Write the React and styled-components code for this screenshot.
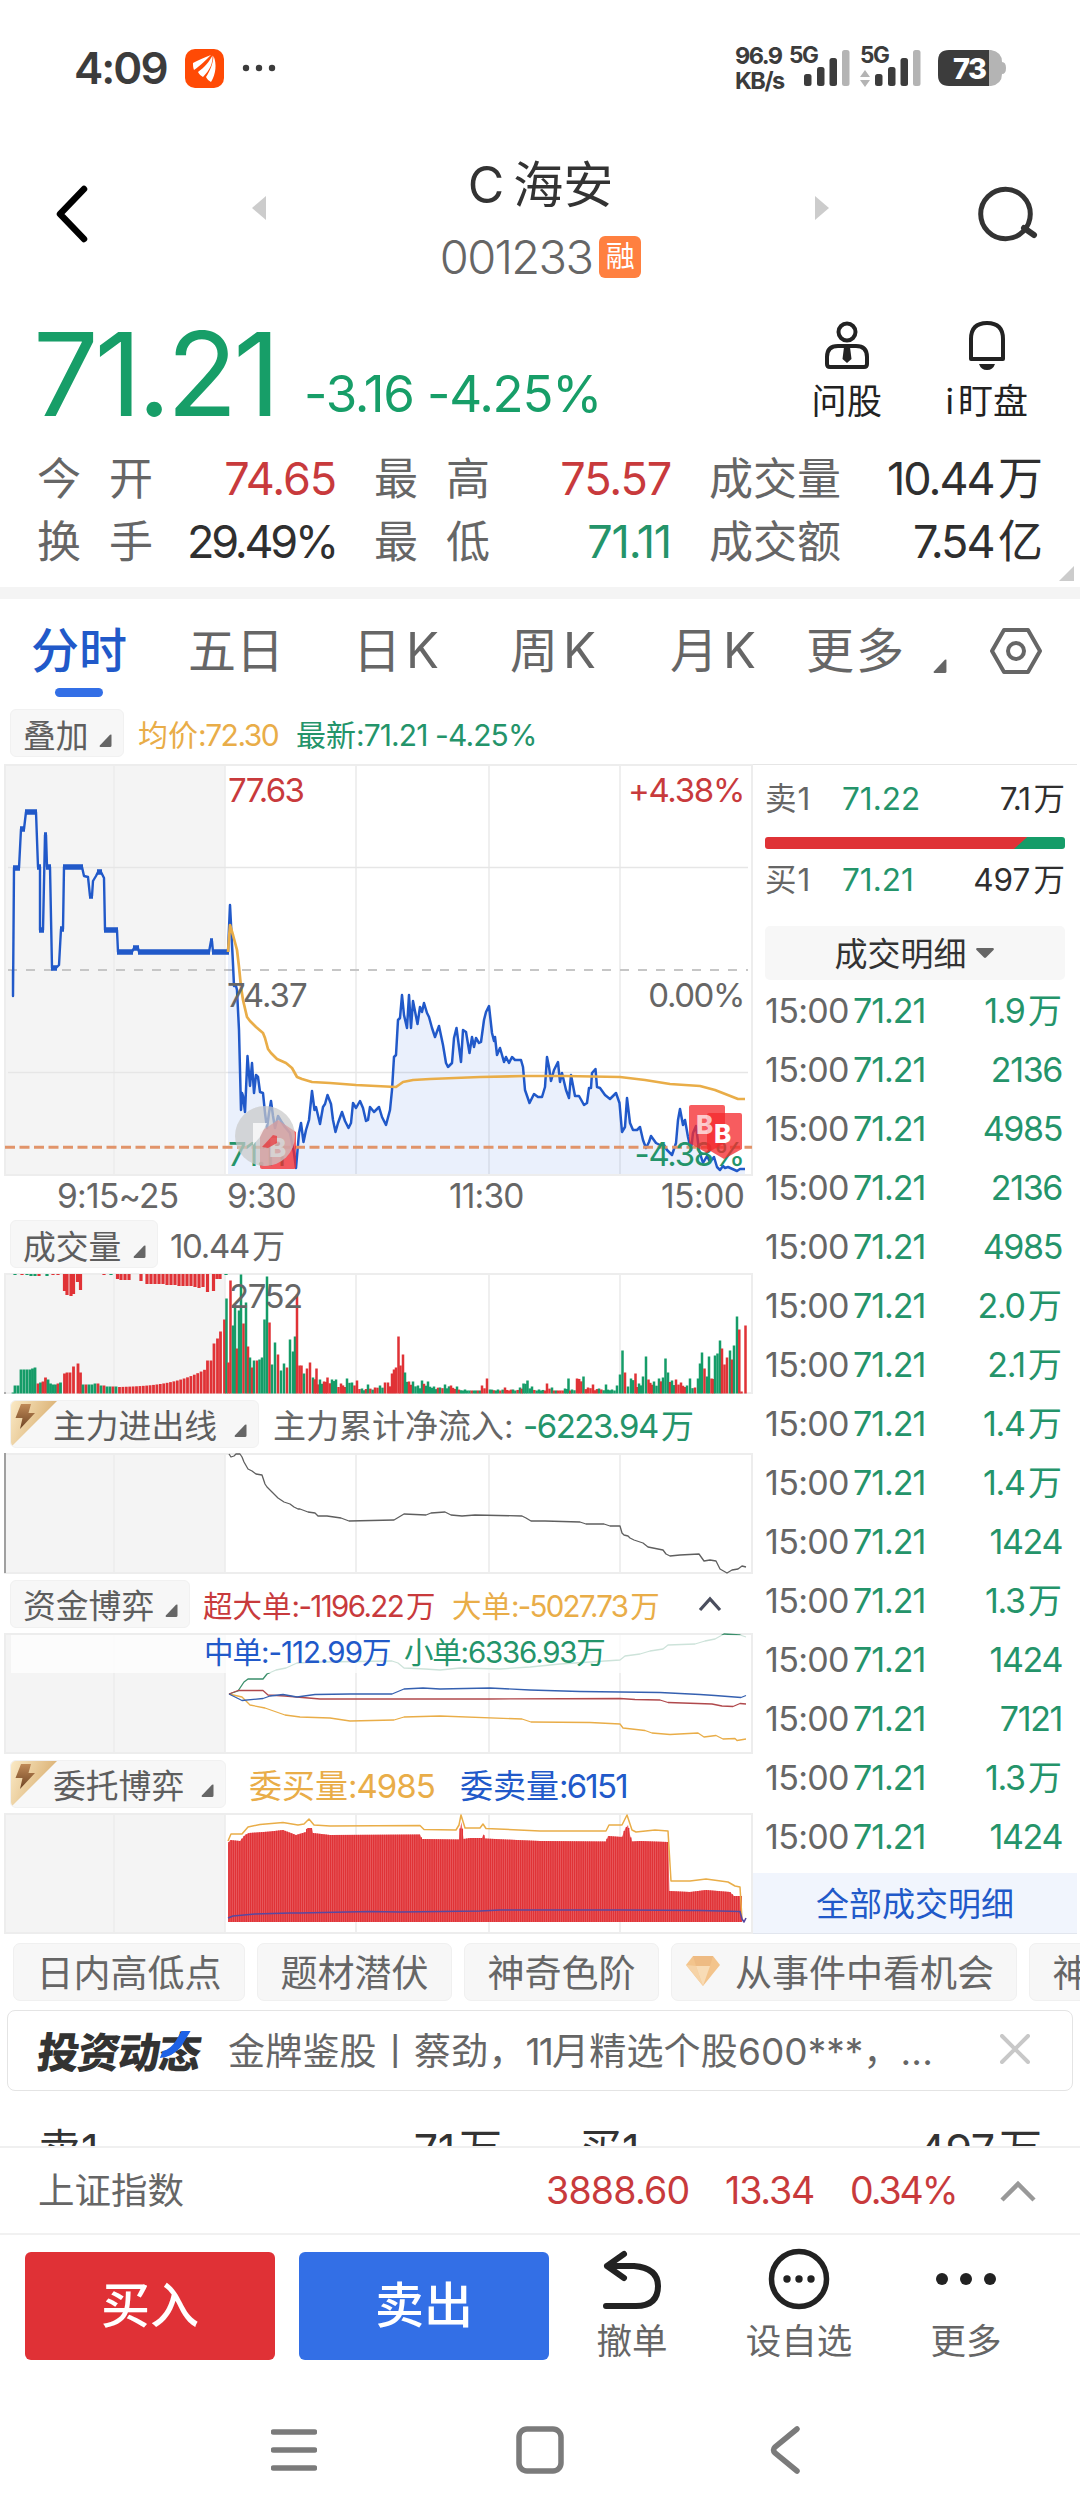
import React from 'react';
import styled, { createGlobalStyle, css } from 'styled-components';

const GlobalStyle = createGlobalStyle`
  * {
    box-sizing: border-box;
  }
  body {
    margin: 0;
    background: #fff;
    font-family: Inter, 'Noto Sans CJK SC', sans-serif;
    color: #333;
  }
  svg {
    display: block;
    flex: none;
  }
`;

const RED = '#c83a3c';
const GREEN = '#24946a';
const BLUE = '#2159c9';
const AMBER = '#e9ad48';
const GRAY = '#666';
const FONT = "Inter, 'Noto Sans CJK SC', sans-serif";

const tones = { red: RED, green: GREEN, blue: BLUE, amber: AMBER, gray: GRAY, dark: '#2f2f2f' };

const Screen = styled.div`
  width: 1080px;
  height: 2520px;
  display: flex;
  flex-direction: column;
  background: #fff;
  overflow: hidden;
`;

/* tight digits, sized per use */
const Num = styled.span`
  color: ${({ $tone }) => tones[$tone] || 'inherit'};
  letter-spacing: ${({ $ls = -0.025 }) => $ls}em;
  white-space: nowrap;
`;

const Unit = styled.span`
  margin-left: 0.1em;
  letter-spacing: 0;
`;

/* ---------- status bar ---------- */

const StatusBar = styled.div`
  height: 136px;
  flex: none;
  display: flex;
  align-items: center;
  justify-content: space-between;
  padding: 0 73px 0 74px;
  color: #3c3c3c;
`;

const StatusGroup = styled.div`
  display: flex;
  align-items: center;
  gap: ${({ $gap }) => $gap}px;
`;

const Clock = styled.div`
  width: 94px;
  font-size: 44px;
  font-weight: 600;
  letter-spacing: -0.045em;
`;

const NetSpeed = styled.div`
  width: 49px;
  font-size: 23.5px;
  line-height: 25px;
  font-weight: 700;
  letter-spacing: -0.065em;
  white-space: nowrap;
`;

const Battery = styled.svg`
  margin-left: 7px;
`;

/* ---------- header ---------- */

const Header = styled.div`
  height: 156px;
  flex: none;
  display: grid;
  grid-template-columns: 252px 14px 1fr 14px 251px;
  align-items: center;
`;

const BackSlot = styled.div`
  padding-left: 56px;
`;

const SearchSlot = styled.div`
  display: flex;
  justify-content: flex-end;
  padding-right: 41px;
`;

const StepArrow = styled.svg`
  margin-bottom: 12px;
`;

const TitleBlock = styled.div`
  display: flex;
  flex-direction: column;
  align-items: center;
  padding-top: 12px;
`;

const StockName = styled.div`
  font-size: 50px;
  line-height: 73px;
  font-weight: 400;
  word-spacing: -5px;
`;

const CodeLine = styled.div`
  display: flex;
  align-items: center;
  gap: 7px;
  height: 69px;
  font-size: 47px;
  font-weight: 300;
  color: ${GRAY};
`;

const MarginBadge = styled.span`
  width: 42px;
  height: 42px;
  border-radius: 6px;
  background: #ff8040;
  color: #fff;
  font-size: 29px;
  line-height: 41px;
  font-weight: 400;
  text-align: center;
`;

/* ---------- quote ---------- */

const QuoteTop = styled.div`
  height: 155px;
  flex: none;
  display: flex;
  justify-content: space-between;
  padding: 0 52px 0 33px;
`;

const PriceLine = styled.div`
  display: flex;
  color: #179e68;
`;

const Price = styled.div`
  width: 271px;
  font-size: 116px;
  line-height: 164px;
  font-weight: 400;
  letter-spacing: -0.036em;
`;

const Change = styled.div`
  font-size: 51px;
  line-height: 203px;
  letter-spacing: -0.024em;
  white-space: nowrap;
`;

const QuoteActions = styled.div`
  display: flex;
  gap: 63px;
  padding-top: 29px;
`;

const QuoteAction = styled.div`
  display: flex;
  flex-direction: column;
  align-items: center;
  font-size: 35px;
  line-height: 60px;
  letter-spacing: 0.5px;
  color: #222;
`;

const Stats = styled.div`
  height: 140px;
  flex: none;
  display: grid;
  grid-template-columns: 299px 297px 334px;
  grid-auto-rows: 63px;
  column-gap: 38px;
  padding-left: 37px;
  position: relative;
`;

const Stat = styled.div`
  display: flex;
  justify-content: space-between;
  font-size: 45px;
  line-height: 64px;
  white-space: nowrap;
`;

const StatLabel = styled.span`
  font-size: 44px;
  color: ${GRAY};
  letter-spacing: ${({ $wide }) => ($wide ? 28 : 0)}px;
`;

const StatCorner = styled.svg`
  position: absolute;
  right: 6px;
  bottom: 6px;
`;

const Divider = styled.div`
  height: 12px;
  flex: none;
  background: #f4f4f4;
`;

/* ---------- tabs ---------- */

const Tabs = styled.div`
  height: 106px;
  flex: none;
  display: grid;
  grid-template-columns: 157px 165px 157px 160px 136px 127px 56px 1fr;
  align-items: center;
  padding: 0 0 3px 31px;
`;

const Tab = styled.div`
  position: relative;
  font-size: 48px;
  line-height: 103px;
  white-space: nowrap;
  letter-spacing: ${({ $loose }) => ($loose ? 2 : 0)}px;
  color: ${({ $active }) => ($active ? BLUE : GRAY)};
  font-weight: ${({ $active }) => ($active ? 500 : 400)};
  ${({ $active }) =>
    $active &&
    css`
      &::after {
        content: '';
        position: absolute;
        left: 24px;
        bottom: 5px;
        width: 48px;
        height: 9px;
        border-radius: 5px;
        background: #336fe6;
      }
    `}
`;

const Latin = styled.span`
  margin-left: 5px;
  font-size: 49px;
`;

const TabCaret = styled.div`
  margin-top: 31px;
`;

/* ---------- main body ---------- */

const Body = styled.div`
  flex: none;
  display: grid;
  grid-template-columns: 753px 324px;
`;

const Charts = styled.div`
  display: flex;
  flex-direction: column;
`;

const InfoBar = styled.div`
  height: ${({ $h = 59 }) => $h}px;
  display: flex;
  align-items: center;
  padding: 0 0 ${({ $lift = 0 }) => $lift}px 10px;
  font-size: ${({ $size = 33 }) => $size}px;
  white-space: nowrap;
`;

const Chip = styled.div`
  position: relative;
  width: ${({ $w }) => $w}px;
  height: 48px;
  display: flex;
  align-items: center;
  justify-content: space-between;
  padding: 0 11px 0 ${({ $hot }) => ($hot ? 42 : 12)}px;
  margin-right: ${({ $gap = 14 }) => $gap}px;
  border-radius: 6px;
  background: #f7f7f7;
  border: 1px solid #f1f1f1;
  font-size: 32.8px;
  color: #5e5e5e;
  overflow: hidden;
`;

const HotCorner = styled.svg`
  position: absolute;
  left: -1px;
  top: -1px;
`;

const ChipCaret = styled.div`
  margin-top: 14px;
`;

const Reading = styled.span`
  color: ${({ $tone }) => tones[$tone]};
  width: ${({ $w }) => ($w ? `${$w}px` : 'auto')};
`;

const Axis = styled.div`
  height: 40px;
  display: grid;
  grid-template-columns: 170px 222px 212px 81px;
  padding-left: 57px;
  font-size: 33.5px;
  line-height: 40px;
  color: ${GRAY};
`;

/* ---------- order column ---------- */

const Orders = styled.div`
  margin-top: 59px;
  border-top: 1px solid #e6e6e6;
  display: flex;
  flex-direction: column;
`;

const BestRow = styled.div`
  height: ${({ $h }) => $h}px;
  display: grid;
  grid-template-columns: 77px 1fr auto;
  align-items: center;
  padding: 0 12px 5px 12px;
  font-size: 31.5px;
  line-height: 40px;
`;

const PressureBar = styled.div`
  display: flex;
  height: 12px;
  margin: 0 12px;
  border-radius: 3px;
  overflow: hidden;
  background: linear-gradient(138deg, #df3236 0 83.5%, #159c68 83.9%);
`;

const DetailButton = styled.div`
  height: 54px;
  margin: 10px 12px 1px;
  padding-bottom: 2px;
  border-radius: 5px;
  background: #f7f7f7;
  display: flex;
  align-items: center;
  justify-content: center;
  gap: 9px;
  font-size: 33px;
  color: #333;
`;

const DetailCaret = styled.svg`
  margin: 2px 2px 0 0;
`;

const Trade = styled.div`
  height: 59px;
  display: grid;
  grid-template-columns: 88px 1fr auto;
  align-items: center;
  padding: 0 15px 0 12px;
  font-size: 34px;
  line-height: 58px;
`;

const AllTrades = styled.div`
  height: 61px;
  margin-top: 7px;
  padding-bottom: 3px;
  display: flex;
  align-items: center;
  justify-content: center;
  background: #f1f5fd;
  border-bottom: 1px solid #e2e6ee;
  font-size: 33px;
  color: ${BLUE};
`;

/* ---------- below the charts ---------- */

const Tags = styled.div`
  flex: none;
  display: flex;
  gap: 12px;
  padding: 9px 0 9px 13px;
`;

const Tag = styled.div`
  flex: none;
  width: ${({ $w }) => $w}px;
  height: 58px;
  display: flex;
  align-items: center;
  justify-content: center;
  gap: 15px;
  padding-bottom: 2px;
  border: 1px solid #f0f0f0;
  border-radius: 7px;
  background: #f7f7f7;
  font-size: 37px;
  color: ${GRAY};
  white-space: nowrap;
`;

const Diamond = styled.svg`
  margin-left: -8px;
`;

const News = styled.div`
  flex: none;
  height: 81px;
  margin: 0 7px;
  padding: 0 42px 3px 30px;
  display: flex;
  align-items: center;
  border: 1.5px solid #e4e4e4;
  border-radius: 8px;
`;

const NewsLogo = styled.div`
  position: relative;
  width: 190px;
  font-size: 42px;
  font-weight: 900;
  letter-spacing: -1.5px;
  transform: skewX(-8deg);
`;

const NewsSlash = styled.svg`
  position: absolute;
  left: 121px;
  top: 12px;
`;

const NewsText = styled.div`
  flex: 1;
  font-size: 37px;
  letter-spacing: 0.2px;
  color: ${GRAY};
  white-space: nowrap;
`;

const Peek = styled.div`
  flex: none;
  height: 55px;
  padding: 28px 38px 0 38px;
  display: grid;
  grid-template-columns: 464px 1fr;
  column-gap: 77px;
  overflow: hidden;
  font-size: 43px;
  line-height: 60px;
`;

const PeekPair = styled.div`
  display: flex;
  justify-content: space-between;
`;

const IndexBar = styled.div`
  flex: none;
  height: 87px;
  display: grid;
  grid-template-columns: 508px 179px 125px 150px 1fr;
  align-items: center;
  padding-left: 38px;
  border-top: 2px solid #f0f0f0;
  font-size: 37.5px;
`;

const IndexName = styled.span`
  margin-top: -4px;
  font-size: 36.5px;
  color: ${GRAY};
`;

const ActionBar = styled.div`
  flex: none;
  height: 151px;
  display: flex;
  align-items: flex-start;
  padding: 17px 0 0 25px;
  border-top: 2px solid #f1f1f1;
`;

const TradeButton = styled.div`
  width: 250px;
  height: 108px;
  margin-right: 24px;
  border-radius: 6px;
  background: ${({ $buy }) => ($buy ? '#e03136' : '#336fe6')};
  color: #fff;
  font-size: 49px;
  font-weight: 500;
  line-height: 108px;
  text-align: center;
`;

const Tool = styled.div`
  width: ${({ $w }) => $w}px;
  display: flex;
  flex-direction: column;
  align-items: center;
  gap: 4px;
  margin-top: -5px;
  font-size: 35.5px;
  line-height: 54px;
  color: ${GRAY};
`;

const NavBar = styled.div`
  flex: none;
  height: 131px;
  display: grid;
  grid-template-columns: 245px 246px 245px;
  justify-content: center;
  justify-items: center;
  align-items: center;
  padding-right: 1px;
`;

/* ---------- data ---------- */

const auction = [
  [13, 206], [13, 232], [14, 104], [19, 104], [21, 65], [24, 65], [26, 48], [36, 48], [38, 103], [40, 103], [40, 166], [43, 166],
  [45, 71], [46, 71], [47, 103], [50, 103], [52, 204], [56, 204], [59, 201], [61, 165], [63, 165], [64, 103], [82, 103], [84, 112],
  [88, 113], [90, 132], [92, 132], [93, 117], [96, 112], [98, 108], [101, 108], [104, 114], [105, 166], [117, 166], [118, 188],
  [132, 188], [134, 184], [138, 184], [139, 188], [209, 188], [211, 177], [212, 177], [213, 188], [228, 188],
];

const session = [
  [228, 188], [230, 141], [233, 200], [234, 222], [236, 222], [237, 226], [239, 266], [241, 346], [242, 329], [243, 332], [245, 348],
  [247.5, 292], [250, 322], [252, 299], [254, 329], [256, 311], [258, 313], [260, 328], [263, 329], [265, 349], [267, 364],
  [269, 349], [271, 337], [273, 352], [275, 364], [278, 352], [281, 357], [285, 363], [290, 369], [294, 389], [296, 404],
  [299, 369], [301, 359], [303.5, 378], [306, 366], [309, 356], [312, 327], [314.5, 346], [316, 343], [320, 360], [323, 343],
  [325, 340], [327.5, 331], [331, 340], [333, 356], [335.5, 368], [338, 359], [342, 348], [345, 357], [348.5, 364], [351, 359],
  [353, 339], [356, 344], [360, 337], [363, 344], [366, 357], [368, 356], [370, 343], [374, 348], [379, 343], [382, 353],
  [386, 361], [390, 346], [392, 326], [394, 293], [396, 291], [398, 256], [400, 254], [402, 231], [404, 251], [407, 264],
  [409, 231], [411, 264], [413, 237], [417.5, 260], [420, 243], [422, 248], [424, 239], [427, 249], [429, 253], [432, 264],
  [435, 273], [439, 262], [443, 281], [446, 299], [448, 303], [452, 299], [454, 274], [456.5, 264], [461, 298], [463, 266],
  [466, 268], [469.5, 289], [472, 273], [474, 283], [476, 274], [479, 279], [481, 278], [484, 256], [486, 248], [489, 242],
  [492, 269], [494, 277], [495, 273], [497, 291], [500, 284], [504, 298], [506, 293], [509, 299], [512, 293], [515, 296],
  [521, 296], [523, 303], [525, 326], [529.5, 339], [534, 330], [538, 333], [542, 333], [545, 323], [547, 293], [549, 303],
  [551, 317], [554, 306], [558, 298], [560, 318], [562, 309], [566, 326], [569, 334], [571, 311], [575, 332], [579, 332],
  [584, 341], [587, 339], [589, 324], [591, 324], [592, 309], [595.5, 305], [597, 323], [600, 324], [605, 331], [610, 335],
  [616, 329], [619.5, 339], [622, 368], [625, 363], [627, 334], [630, 359], [633, 366], [637, 366], [640, 363], [643, 376],
  [646, 384], [649, 378], [651, 372], [656, 379], [660, 381], [664, 381], [667, 386], [672, 391], [676, 379], [678, 356],
  [680, 345], [683, 361], [685, 356], [688, 373], [691, 386], [693, 369], [696, 362], [699, 386], [703, 399], [707, 392],
  [710, 398], [714, 393], [717, 403], [720, 406], [723, 402], [725, 404], [728, 403], [737, 407], [740, 405], [745, 405],
];

const average = [
  [228, 188], [230, 161], [233, 171], [237, 186], [239, 203], [241, 223], [243, 236], [247, 253], [250, 257], [256, 263],
  [263, 269], [265, 274], [268, 285], [271, 289], [277, 295], [286, 299], [292, 304], [297, 313], [302, 315], [312, 318],
  [330, 319], [356, 321], [396, 323], [403, 318], [413, 316], [430, 315], [480, 313], [524, 312], [565, 312], [620, 313],
  [645, 316], [670, 320], [700, 322], [715, 326], [738, 335], [745, 335],
];

// [x, height, color] of the auction bars, bottom side
const auctionBars = [
  [13, 1, 'g'], [15, 8, 'g'], [18, 8, 'g'], [21, 24, 'g'], [24, 24, 'g'], [27, 24, 'g'], [30, 24, 'g'], [32.5, 25, 'g'], [35, 26, 'g'],
  [38, 10, 'r'], [40.5, 11, 'g'], [43, 12, 'r'], [45.5, 16, 'r'], [48, 14, 'g'], [50.5, 10, 'g'], [53, 9, 'g'], [55.5, 9, 'g'], [58, 10, 'r'],
  [60.5, 11, 'g'], [64.5, 20, 'r'], [67, 21, 'r'], [70, 21, 'r'], [73.5, 27, 'r'], [78, 30, 'r'], [80.5, 21, 'r'], [83, 9, 'g'], [86, 9, 'r'],
  [89, 9, 'g'], [92, 9, 'g'], [95, 10, 'g'], [98, 10, 'r'], [101, 8, 'g'], [104, 8, 'r'], [107, 7, 'g'], [110, 7, 'g'], [113, 7, 'r'],
  [116, 7, 'g'],
];
for (let i = 0; i < 26; i += 1) {
  auctionBars.push([119.5 + i * 3.4, 6.5 + (i * i * i) / 1100 + i * 0.12, 'r']);
}
auctionBars.push([207.5, 33, 'r'], [211, 33, 'r'], [214, 50, 'r'], [217.5, 55, 'r'], [220.5, 62, 'r'], [224.5, 74, 'r']);

const hangingBars = [
  [15, 1, 'g'], [22, 1, 'r'], [27, 1, 'g'], [31, 2, 'g'], [35, 2, 'g'], [39, 2, 'r'], [47, 2, 'g'], [53, 1, 'r'], [58, 1, 'r'], [64.5, 17, 'r'], [67, 21, 'r'],
  [71, 22, 'r'], [73.5, 20, 'r'], [77.5, 8, 'r'], [80.5, 16, 'r'], [104, 1, 'r'], [111, 1, 'g'], [117.5, 5, 'r'], [121, 6, 'r'], [125, 6, 'r'],
  [129, 6, 'r'], [141, 7, 'r'], [147, 10, 'r'], [151, 10, 'r'], [155, 10, 'r'], [159, 10, 'r'], [163, 10, 'r'], [167, 11, 'r'],
  [171, 11, 'r'], [175, 11, 'r'], [179, 12, 'r'], [183, 12, 'r'], [187, 12, 'r'], [191, 12, 'r'], [195, 13, 'r'], [199, 14, 'r'],
  [203, 13, 'r'], [207.5, 18, 'r'], [213.5, 17, 'r'], [217, 5, 'r'], [220, 5, 'r'], [226, 1, 'g'],
];

const peaks = [
  [226.5, 95, 'g'], [228.5, 31, 'r'], [230.5, 113, 'r'], [233, 68, 'g'], [235, 87, 'g'], [237, 45, 'r'], [239, 83, 'g'], [241, 119, 'g'],
  [243.5, 70, 'r'], [246, 91, 'g'], [248, 47, 'r'], [250, 36, 'g'], [252, 26, 'r'], [254, 33, 'g'], [257, 33, 'r'], [259.5, 34, 'g'], [262, 36, 'g'],
  [264.5, 74, 'g'], [267, 117, 'g'], [269.5, 71, 'r'], [272, 29, 'g'], [275, 51, 'g'], [278, 39, 'r'], [281, 23, 'g'], [284, 30, 'g'],
  [287, 26, 'r'], [290, 54, 'g'], [293, 42, 'g'], [295, 57, 'g'], [297, 99, 'r'], [299.5, 28, 'r'], [301.5, 28, 'r'], [304, 20, 'g'],
  [307, 25, 'r'], [310, 31, 'r'], [313, 16, 'g'], [316.5, 25, 'r'], [320, 14, 'g'], [324, 12, 'r'], [327.5, 16, 'r'], [332, 14, 'g'],
  [336, 14, 'g'], [341, 10, 'r'], [347, 15, 'g'], [352, 11, 'g'], [357, 13, 'r'], [362, 5, 'g'], [368, 9, 'g'], [375, 6, 'r'],
  [380, 8, 'g'], [385, 11, 'r'], [388, 11, 'r'], [392, 20, 'r'], [394, 24, 'r'], [396, 26, 'r'], [398.5, 57, 'r'], [400.5, 28, 'r'],
  [403, 39, 'r'], [405, 21, 'g'], [409, 12, 'r'], [413, 12, 'g'], [418, 8, 'g'], [422, 13, 'g'], [428, 12, 'g'], [434, 7, 'g'],
  [440, 6, 'g'], [445, 9, 'g'], [451, 8, 'r'], [457, 7, 'g'], [465, 4, 'g'], [474, 3, 'g'], [482, 8, 'r'], [487, 15, 'r'],
  [490, 4, 'g'], [498, 4, 'g'], [505, 6, 'r'], [513, 4, 'g'], [520, 6, 'g'], [523.5, 10, 'g'], [527.5, 13, 'g'], [532, 7, 'g'],
  [539, 4, 'g'], [547, 10, 'r'], [552, 6, 'g'], [558, 3, 'r'], [565, 5, 'g'], [568.5, 15, 'g'], [572, 4, 'g'], [577, 15, 'r'],
  [583.5, 17, 'g'], [588, 6, 'r'], [593, 9, 'r'], [599, 5, 'g'], [606, 9, 'g'], [612, 4, 'g'], [617, 8, 'g'], [620, 19, 'g'],
  [622.5, 43, 'g'], [625, 21, 'r'], [628, 7, 'g'], [631, 15, 'g'], [635.5, 20, 'r'], [639, 10, 'g'], [643, 17, 'g'], [646, 37, 'g'],
  [648.5, 14, 'r'], [654, 12, 'g'], [659, 15, 'g'], [663, 16, 'g'], [665.5, 35, 'g'], [668, 21, 'g'], [672, 13, 'g'], [676, 14, 'r'],
  [681, 11, 'r'], [687, 8, 'g'], [690, 15, 'g'], [695, 6, 'r'], [698, 15, 'g'], [700, 30, 'g'], [702, 41, 'g'], [704.5, 25, 'r'],
  [707, 17, 'g'], [709, 37, 'g'], [711.5, 15, 'r'], [715, 38, 'g'], [717.5, 40, 'g'], [720, 53, 'g'], [722, 45, 'r'], [724.5, 29, 'r'],
  [727, 36, 'r'], [730, 43, 'g'], [732, 34, 'r'], [734, 48, 'g'], [737, 77, 'g'], [739.3, 64, 'r'], [741.5, 2, 'r'], [745.5, 68, 'r'],
];

// quieter minutes between two listed ones
const minuteBars = peaks.flatMap((bar, i) => {
  const next = peaks[i + 1];
  if (!next || bar[0] > 740) return [bar];
  const missing = Math.round((next[0] - bar[0]) / 2.2) - 1;
  const fill = [];
  for (let k = 1; k <= missing; k += 1) {
    const x = bar[0] + ((next[0] - bar[0]) * k) / (missing + 1);
    const h = Math.max(3, Math.min(bar[1], next[1]) * (0.65 + ((i * 7 + k * 3) % 5) * 0.08));
    fill.push([x, h, (i + k) % 3 ? bar[2] : 'r']);
  }
  return [bar, ...fill];
});

const mainFlow = [
  [229, 1], [231, 4], [234, 3], [236, 1], [240, 1], [242, 4], [244, 9], [248, 16], [252, 18], [256, 21], [262, 22], [265, 31],
  [267, 34], [272, 39], [278, 45], [284, 49], [290, 51], [294, 54], [298, 56], [300, 56], [308, 59], [315, 60], [318, 63], [327, 63],
  [341, 65], [349, 68], [394, 67], [399, 64], [404, 61], [426, 62], [431, 60], [445, 59], [451, 62], [462, 63], [475, 62], [522, 63],
  [526, 65], [531, 68], [545, 68], [580, 69], [586, 71], [604, 71], [610, 73], [620, 73], [622, 80], [624, 82], [628, 83], [630, 85],
  [634, 87], [643, 90], [648, 94], [663, 97], [666, 101], [670, 103], [680, 102], [699, 101], [704, 108], [710, 107], [716, 108],
  [720, 116], [727, 120], [732, 117], [738, 116], [742, 113], [746, 114],
];

const funds = {
  green: [
    [229, 61], [238, 58], [244, 49], [248, 46], [263, 46], [267, 41], [276, 37], [286, 35], [297, 30], [320, 29], [392, 28], [398, 30],
    [404, 35], [425, 36], [440, 37], [460, 35], [500, 36], [530, 34], [560, 31], [620, 27], [625, 23], [640, 21], [650, 18], [663, 16],
    [668, 12], [695, 11], [705, 8], [715, 6], [724, 1], [740, 2], [746, 4],
  ],
  red: [
    [229, 61], [238, 57.5], [263, 57.5], [268, 62], [285, 63], [320, 66], [488, 66], [620, 65.5], [635, 66.5], [660, 67], [668, 69.5],
    [712, 71], [722, 73], [733, 73.5], [740, 70.5], [746, 71],
  ],
  blue: [
    [229, 61], [242, 67.5], [263, 65.5], [270, 63], [283, 61.5], [297, 64], [315, 61.5], [350, 61], [392, 61], [404, 56], [423, 55],
    [440, 56], [490, 55], [530, 57], [580, 58.5], [660, 59.5], [700, 61.5], [715, 62.5], [741, 64.5], [746, 62.5],
  ],
  amber: [
    [229, 61], [242, 64], [250, 72], [265, 75], [285, 82], [300, 84], [330, 85], [350, 88], [394, 87], [404, 84], [440, 83], [522, 86],
    [531, 89], [590, 89.5], [620, 91], [623, 95], [645, 97.5], [652, 100], [670, 101.5], [698, 100], [704, 104], [716, 102.5],
    [723, 106], [735, 105.5], [737, 107.5], [746, 106],
  ],
};

const commissionTops = [
  [228, 31], [230, 27], [240, 28], [245, 22], [249, 20], [270, 18.5], [283, 17], [296, 22], [306, 19], [307, 15], [312, 15], [313, 20],
  [330, 22], [420, 21.5], [422, 26], [459, 26.5], [460, 16], [461.5, 9], [463.5, 26], [470, 25], [482, 25], [483.5, 21], [485, 25.5],
  [517, 27], [540, 28], [606, 28.5], [608, 23], [622, 24], [625, 16], [628, 12], [630, 22], [632, 28.5], [640, 28], [668, 29], [669.5, 78],
  [690, 79], [706, 77], [730, 79], [734, 83], [742, 83],
];

const buyLine = [
  [228, 28], [231, 21], [242, 21], [248, 14], [260, 11.5], [283, 9.5], [298, 12], [304, 11], [309, 6], [314, 12], [330, 13], [420, 12.5],
  [424, 16.5], [456, 17], [459, 12], [461, 2], [465, 15], [480, 15], [483, 11], [486, 15.5], [540, 18], [606, 18], [609, 12], [622, 12],
  [627, 2], [632, 17], [636, 19], [655, 17], [668, 18], [671, 68], [690, 68], [706, 66], [728, 69], [735, 73], [740, 74], [742, 106],
];

const sellLine = [
  [228, 105], [233, 103], [255, 101], [290, 100], [300, 100], [370, 98.5], [400, 99], [480, 98], [500, 97], [620, 97], [700, 97.5],
  [740, 98.5], [742, 106], [744, 109], [746, 105],
];

const trades = [
  '1.9万', '2136', '4985', '2136', '4985', '2.0万', '2.1万', '1.4万', '1.4万', '1424', '1.3万', '1424', '7121', '1.3万', '1424',
];

const path = (pts) => pts.map((p) => p.join(',')).join(' ');

const topAt = (pts, x) => {
  const i = pts.findIndex((p) => p[0] >= x);
  if (i <= 0) return pts[0][1];
  const [x0, y0] = pts[i - 1];
  const [x1, y1] = pts[i];
  return y0 + ((y1 - y0) * (x - x0)) / (x1 - x0);
};

/* a number followed by 万 or 亿 */
const Amount = ({ value, ...rest }) => {
  const unit = value.match(/[万亿]$/);
  return (
    <Num {...rest}>
      {unit ? value.slice(0, -1) : value}
      {unit && <Unit>{unit[0]}</Unit>}
    </Num>
  );
};

/* ---------- chart parts ---------- */

const Frame = ({ height }) => (
  <g>
    <rect x="5" y="1" width="220" height={height - 2} fill="#f4f4f4" />
    <path d={`M114 1V${height}M225 1V${height}`} stroke="#ebebeb" strokeWidth="1.5" />
    <path d={`M356 1V${height}M489 1V${height}M620 1V${height}`} stroke="#efefef" strokeWidth="2" />
    <rect x="5" y="1" width="747" height={height - 2} fill="none" stroke="#ededed" strokeWidth="2" />
  </g>
);

const Label = ({ x, y, tone, end, ls = -1.8, size = 33, children }) => (
  <text
    x={x}
    y={y}
    fill={tones[tone]}
    fontFamily={FONT}
    fontSize={size}
    letterSpacing={ls}
    textAnchor={end ? 'end' : 'start'}
  >
    {children}
  </text>
);

const Line = ({ points, color, width = 1.3, opacity = 1 }) => (
  <polyline points={path(points)} fill="none" stroke={color} strokeWidth={width} opacity={opacity} strokeLinejoin="round" />
);

const Bars = ({ bars, base, up = true, width = 2.3 }) =>
  bars.map(([x, h, c]) => (
    <rect key={x} x={x - width / 2} y={up ? base - h : base} width={width} height={h} fill={c === 'g' ? '#159c68' : '#e03236'} />
  ));

const PriceChart = () => (
  <svg width="753" height="412">
    <Frame height={412} />
    <path d="M8 103.5H748M8 308.5H748" stroke="#e6e6e6" strokeWidth="1.5" />
    <path d="M8 206H748" stroke="#c6c6c6" strokeWidth="2" strokeDasharray="9 9" />
    <polygon points={`228,410 ${path(session)} 745,410`} fill="#336fe6" fillOpacity="0.1" />
    <Line points={auction} color={BLUE} width={2.4} />
    {auction.slice(1).map((p, i) => {
      const prev = auction[i];
      return p[1] === prev[1] && <path key={i} d={`M${prev[0] - 1} ${p[1]}H${p[0] + 1}`} stroke={BLUE} strokeWidth="5.5" />;
    })}
    <Line points={session} color={BLUE} width={2.5} />
    <Line points={average} color={AMBER} width={2.7} />
    <path d="M5 383.3H752" stroke="#e1946a" strokeWidth="3" strokeDasharray="10 4.5" />
    <Label x={228} y={38} tone="red" ls={-1.6}>77.63</Label>
    <Label x={744} y={38} tone="red" end ls={-1.3}>+4.38%</Label>
    <Label x={227} y={243} tone="gray" ls={-1}>74.37</Label>
    <Label x={744} y={243} tone="gray" end ls={-1.4}>0.00%</Label>
    <Label x={228} y={402} tone="green">71.11</Label>
    <Label x={744} y={402} tone="green" end ls={-1.3}>-4.38%</Label>
    <g fill="#f5292d" fillOpacity="0.76">
      <path d="M260 368L278 356L296 368V403Q296 405 294 405H262Q260 405 260 403Z" />
      <path d="M691 341H723Q725 341 725 343V379L707 389L689 379V343Q689 341 691 341Z" />
      <path d="M709 349H740Q742 349 742 351V385L724 395L707 385V351Q707 349 709 349Z" />
    </g>
    <g fill="#fff" fontFamily={FONT} fontWeight="800" fontSize="26">
      <text x="269" y="393" fillOpacity="0.85">B</text>
      <text x="696" y="370" fillOpacity="0.7">B</text>
      <text x="714" y="379">B</text>
    </g>
    <circle cx="265" cy="372" r="30" fill="#c9c9c9" fillOpacity="0.72" />
    <path d="M253 359H267L260 373L253 381Z" fill="#fff" fillOpacity="0.75" />
    <path d="M262 383L273 371L277 372V379L268 384Z" fill="#e8343a" fillOpacity="0.75" />
  </svg>
);

const VolumeChart = () => (
  <svg width="753" height="121">
    <Frame height={121} />
    <Bars bars={auctionBars} base={120.5} width={2.8} />
    <Bars bars={hangingBars} base={1} up={false} width={3.2} />
    <Bars bars={minuteBars} base={120.5} width={2.5} />
    <path d="M5 119V121" stroke="#999" strokeWidth="1.5" />
    <Label x={229} y={35} tone="gray" ls={-1.5}>2752</Label>
  </svg>
);

const MainFlowChart = () => (
  <svg width="753" height="121">
    <Frame height={121} />
    <path d="M5 0V120" stroke="#8c8c8c" strokeWidth="1.6" />
    <Line points={mainFlow} color="#5f5f5f" />
  </svg>
);

const FundsChart = () => (
  <svg width="753" height="121">
    <Frame height={121} />
    <Line points={funds.green} color="#3a8f6b" />
    <Line points={funds.amber} color={AMBER} />
    <Line points={funds.red} color="#b0494c" />
    <Line points={funds.blue} color="#3560b0" />
    <rect x="11" y="2" width="738" height="38" fill="#fff" fillOpacity="0.75" />
    <Label x={204} y={29.5} tone="blue" size={29.5} ls={-1}>中单:-112.99万</Label>
    <Label x={404} y={29.5} tone="green" size={29.5} ls={-1.2}>小单:6336.93万</Label>
  </svg>
);

const CommissionChart = () => {
  const bars = [];
  for (let x = 229; x < 741; x += 2.16) {
    bars.push([x, 109 - topAt(commissionTops, x), 'r']);
  }
  return (
    <svg width="753" height="121">
      <Frame height={121} />
      <polygon points={`228,109 ${path(commissionTops)} 742,109`} fill="#ea6a6d" />
      <Bars bars={bars} base={109} width={1.5} />
      <Line points={buyLine} color={AMBER} width={1.5} />
      <Line points={sellLine} color="#5848a0" width={1.6} />
    </svg>
  );
};

/* ---------- icons ---------- */

const CornerTri = ({ size = 13, color = GRAY }) => (
  <svg width={size} height={size} viewBox="0 0 13 13">
    <path d="M12.5 0.8V11.5Q12.5 13 11 13H1.3Q0 12.6 0.8 11.6L11 0.8Q12.2 0 12.5 0.8Z" fill={color} />
  </svg>
);

const Bolt = () => (
  <HotCorner width="48" height="48" viewBox="0 0 48 48">
    <defs>
      <linearGradient id="gold" x1="0" y1="0" x2="1" y2="0.4">
        <stop offset="0" stopColor="#fbebc8" />
        <stop offset="1" stopColor="#d8ac6c" />
      </linearGradient>
      <linearGradient id="bronze" x1="0" y1="0" x2="0" y2="1">
        <stop offset="0" stopColor="#c08a58" />
        <stop offset="1" stopColor="#6e4322" />
      </linearGradient>
    </defs>
    <path d="M0 0H48L0 48Z" fill="url(#gold)" />
    <path d="M11 4H21L18.5 13H25L10 29L12.5 18H5.5Z" fill="url(#bronze)" />
  </HotCorner>
);

const Signal = ({ arrows }) => (
  <svg width="66" height="60" viewBox="0 -8 66 60">
    {arrows && <path d="M0 31H10L5 24ZM0 34H10L5 41Z" fill="#b4b4b4" />}
    <rect x="15" y="28" width="7.5" height="12" rx="2.5" fill="#3c3c3c" />
    <rect x="28" y="21" width="7.5" height="19" rx="2.5" fill="#3c3c3c" />
    <rect x="40.5" y="12" width="7.5" height="28" rx="2.5" fill="#3c3c3c" />
    <rect x="53" y="4" width="7.5" height="36" rx="2.5" fill="#b4b4b4" />
    <text x="0" y="17" fill="#3c3c3c" fontFamily={FONT} fontSize="22.5" fontWeight="700" letterSpacing="-1.5">
      5G
    </text>
  </svg>
);

const chipCaret = (
  <ChipCaret>
    <CornerTri />
  </ChipCaret>
);

const App = () => {
  return (
    <>
      <GlobalStyle />
      <Screen>
        <StatusBar>
          <StatusGroup $gap={17}>
            <Clock>4:09</Clock>
            <svg width="39" height="39" viewBox="0 0 39 39">
              <rect width="39" height="39" rx="10" fill="#ff4a05" />
              <path d="M8 14C13 11 19 9 26 6C20 12 17 15 9 21C8 19 8 16 8 14Z" fill="#fff" />
              <path d="M13 23C20 18 24 13 27.500 6.500C28 14 25 21 18 28C16 27 14 25 13 23Z" fill="#fff" />
              <path d="M21 28C25 22 28 15 28.500 7C32 15 31 25 26 33C24 32 22 30 21 28Z" fill="#fff" />
            </svg>
            <svg width="36" height="8" viewBox="0 0 36 8">
              <circle cx="5" cy="4" r="3.200" fill="#3c3c3c" />
              <circle cx="18" cy="4" r="3.200" fill="#3c3c3c" />
              <circle cx="31" cy="4" r="3.200" fill="#3c3c3c" />
            </svg>
          </StatusGroup>
          <StatusGroup $gap={5}>
            <NetSpeed>
              96.9
              <br />
              KB/s
            </NetSpeed>
            <Signal />
            <Signal arrows />
            <Battery width="69" height="36" viewBox="0 0 69 36">
              <path d="M50 0H53Q64 2 64 12Q68 12 68 18Q68 24 64 24Q64 34 53 36H50Z" fill="#b4b4b4" />
              <path d="M11 0H51V36H11Q0 36 0 25V11Q0 0 11 0Z" fill="#3c3c3c" />
              <text x="15" y="29" fill="#fff" fontFamily={FONT} fontSize="29" fontWeight="800" letterSpacing="-1.500">
                73
              </text>
            </Battery>
          </StatusGroup>
        </StatusBar>

        <Header>
          <BackSlot>
            <svg width="32" height="58" viewBox="0 0 32 58">
              <path d="M28 4L4 29L28 54" fill="none" stroke="#000" strokeWidth="6.500" strokeLinecap="round" strokeLinejoin="round" />
            </svg>
          </BackSlot>
          <StepArrow width="14" height="24" viewBox="0 0 14 24">
            <path d="M14 0V24L0 12Z" fill="#ccc" />
          </StepArrow>
          <TitleBlock>
            <StockName>C 海安</StockName>
            <CodeLine>
              <Num $ls={-0.035}>001233</Num>
              <MarginBadge>融</MarginBadge>
            </CodeLine>
          </TitleBlock>
          <StepArrow width="14" height="24" viewBox="0 0 14 24">
            <path d="M0 0V24L14 12Z" fill="#ccc" />
          </StepArrow>
          <SearchSlot>
            <svg width="62" height="56" viewBox="0 0 62 56">
              <circle cx="28.500" cy="28" r="24.800" fill="none" stroke="#333" strokeWidth="5" />
              <path d="M47 42L57 49" stroke="#333" strokeWidth="6" strokeLinecap="round" />
            </svg>
          </SearchSlot>
        </Header>

        <QuoteTop>
          <PriceLine>
            <Price>71.21</Price>
            <Change>-3.16 -4.25%</Change>
          </PriceLine>
          <QuoteActions>
            <QuoteAction>
              <svg width="48" height="50" viewBox="0 0 48 50">
                <circle cx="24" cy="11" r="8.500" fill="none" stroke="#222" strokeWidth="4" />
                <path d="M15 25H33Q44 25 44 36V43Q44 46 41 46H7Q4 46 4 43V36Q4 25 15 25Z" fill="none" stroke="#222" strokeWidth="4" />
                <path d="M21 26H27L28.500 38L24 42L19.500 38Z" fill="#222" />
              </svg>
              问股
            </QuoteAction>
            <QuoteAction>
              <svg width="48" height="50" viewBox="0 0 48 50">
                <path d="M8 38V18Q8 2 24 2Q40 2 40 18V38Z" fill="none" stroke="#222" strokeWidth="4" strokeLinejoin="round" />
                <path d="M16 43H32Q30 49 24 49Q18 49 16 43Z" fill="#222" />
              </svg>
              <span>
                i<Unit>盯盘</Unit>
              </span>
            </QuoteAction>
          </QuoteActions>
        </QuoteTop>

        <Stats>
          <Stat>
            <StatLabel $wide>今开</StatLabel>
            <Num $tone="red">74.65</Num>
          </Stat>
          <Stat>
            <StatLabel $wide>最高</StatLabel>
            <Num $tone="red">75.57</Num>
          </Stat>
          <Stat>
            <StatLabel>成交量</StatLabel>
            <Amount $tone="dark" $ls={-0.045} value="10.44万" />
          </Stat>
          <Stat>
            <StatLabel $wide>换手</StatLabel>
            <Num $tone="dark" $ls={-0.072}>29.49%</Num>
          </Stat>
          <Stat>
            <StatLabel $wide>最低</StatLabel>
            <Num $tone="green">71.11</Num>
          </Stat>
          <Stat>
            <StatLabel>成交额</StatLabel>
            <Amount $tone="dark" $ls={-0.045} value="7.54亿" />
          </Stat>
          <StatCorner width="15" height="15" viewBox="0 0 15 15">
            <path d="M15 0V15H0Z" fill="#ccc" />
          </StatCorner>
        </Stats>
        <Divider />

        <Tabs>
          <Tab $active>分时</Tab>
          <Tab>五日</Tab>
          <Tab>
            日<Latin>K</Latin>
          </Tab>
          <Tab>
            周<Latin>K</Latin>
          </Tab>
          <Tab>
            月<Latin>K</Latin>
          </Tab>
          <Tab $loose>更多</Tab>
          <TabCaret>
            <CornerTri size={14} />
          </TabCaret>
          <svg width="54" height="48" viewBox="0 0 54 48">
            <path d="M15 3H39L51 24L39 45H15L3 24Z" fill="none" stroke="#666" strokeWidth="4" strokeLinejoin="round" />
            <circle cx="27" cy="24" r="8" fill="none" stroke="#666" strokeWidth="4" />
          </svg>
        </Tabs>

        <Body>
          <Charts>
            <InfoBar $size={30} $lift={3}>
              <Chip $w={114}>叠加{chipCaret}</Chip>
              <Reading $tone="amber" $w={158}>
                均价<Num $ls={-0.05}>:72.30</Num>
              </Reading>
              <Reading $tone="green">
                最新<Num $ls={-0.03}>:71.21 -4.25%</Num>
              </Reading>
            </InfoBar>
            <PriceChart />
            <Axis>
              <Num $ls={-0.02}>9:15~25</Num>
              <Num>9:30</Num>
              <Num>11:30</Num>
              <Num $ls={-0.015}>15:00</Num>
            </Axis>
            <InfoBar $h={57} $lift={1}>
              <Chip $w={148} $gap={12}>成交量{chipCaret}</Chip>
              <Reading $tone="gray">
                <Amount $ls={-0.04} value="10.44万" />
              </Reading>
            </InfoBar>
            <VolumeChart />
            <InfoBar>
              <Chip $hot $w={249}>
                <Bolt />
                主力进出线{chipCaret}
              </Chip>
              <Reading $tone="gray" $w={250}>主力累计净流入:</Reading>
              <Reading $tone="green">
                <Amount $ls={-0.045} value="-6223.94万" />
              </Reading>
            </InfoBar>
            <MainFlowChart />
            <InfoBar $size={29.5}>
              <Chip $w={180} $gap={13}>资金博弈{chipCaret}</Chip>
              <Reading $tone="red" $w={249}>
                超大单<Amount $ls={-0.055} value=":-1196.22万" />
              </Reading>
              <Reading $tone="amber" $w={246}>
                大单<Amount $ls={-0.06} value=":-5027.73万" />
              </Reading>
              <svg width="24" height="16" viewBox="0 0 24 16">
                <path d="M2 14L12 3L22 14" fill="none" stroke="#4a4e5e" strokeWidth="3.200" />
              </svg>
            </InfoBar>
            <FundsChart />
            <InfoBar>
              <Chip $hot $w={216} $gap={23}>
                <Bolt />
                委托博弈{chipCaret}
              </Chip>
              <Reading $tone="amber" $w={211}>
                委买量<Num $ls={-0.03}>:4985</Num>
              </Reading>
              <Reading $tone="blue">
                委卖量<Num $ls={-0.055}>:6151</Num>
              </Reading>
            </InfoBar>
            <CommissionChart />
          </Charts>

          <Orders>
            <BestRow $h={72}>
              <Reading $tone="gray">
                <Num $ls={0.03}>卖1</Num>
              </Reading>
              <Num $tone="green" $ls={0}>71.22</Num>
              <Amount $tone="dark" value="7.1万" />
            </BestRow>
            <PressureBar />
            <BestRow $h={67}>
              <Reading $tone="gray">
                <Num $ls={0.03}>买1</Num>
              </Reading>
              <Num $tone="green" $ls={0}>71.21</Num>
              <Amount $tone="dark" $ls={0} value="497万" />
            </BestRow>
            <DetailButton>
              成交明细
              <DetailCaret width="18" height="10" viewBox="0 0 18 10">
                <path d="M1 0H17Q18.500 0.500 17.500 2L10 9.500Q9 10.300 8 9.500L0.500 2Q-0.500 0.500 1 0Z" fill="#666" />
              </DetailCaret>
            </DetailButton>
            {trades.map((vol, i) => (
              <Trade key={i}>
                <Num $tone="gray" $ls={-0.02}>15:00</Num>
                <Num $tone="green" $ls={-0.03}>71.21</Num>
                <Amount $tone="green" $ls={-0.04} value={vol} />
              </Trade>
            ))}
            <AllTrades>全部成交明细</AllTrades>
          </Orders>
        </Body>

        <Tags>
          <Tag $w={232}>日内高低点</Tag>
          <Tag $w={195}>题材潜伏</Tag>
          <Tag $w={195}>神奇色阶</Tag>
          <Tag $w={346}>
            <Diamond width="34" height="30" viewBox="0 0 34 30">
              <path d="M7 0H27L34 9L17 30L0 9Z" fill="#f3c48c" />
              <path d="M7 0H27L24 10H10Z" fill="#eebb83" />
              <path d="M0 9L10 10L17 30Z" fill="#f6d3a6" />
              <path d="M10 10H24L17 30Z" fill="#f8dcb6" />
            </Diamond>
            从事件中看机会
          </Tag>
          <Tag $w={195}>神奇电波</Tag>
        </Tags>

        <News>
          <NewsLogo>
            投资动态
            <NewsSlash width="30" height="28" viewBox="0 0 30 28">
              <path d="M20 0H29L22 15Q15 26 2 27L4 20Q12 18 16 9Z" fill="#1f62e6" />
            </NewsSlash>
          </NewsLogo>
          <NewsText>
            金牌鉴股丨蔡劲，<Num $ls={-0.05}>11</Num>月精选个股<Num $ls={0}>600***</Num>，...
          </NewsText>
          <svg width="30" height="30" viewBox="0 0 30 30">
            <path d="M2 2L28 28M28 2L2 28" stroke="#c8c8c8" strokeWidth="4" strokeLinecap="round" />
          </svg>
        </News>

        <Peek>
          <PeekPair>
            <span>卖1</span>
            <Amount $ls={-0.01} value="71万" />
          </PeekPair>
          <PeekPair>
            <span>买1</span>
            <Amount $ls={-0.01} value="497万" />
          </PeekPair>
        </Peek>

        <IndexBar>
          <IndexName>上证指数</IndexName>
          <Num $tone="red" $ls={-0.02}>3888.60</Num>
          <Num $tone="red" $ls={-0.03}>13.34</Num>
          <Num $tone="red" $ls={-0.055}>0.34%</Num>
          <svg width="36" height="22" viewBox="0 0 36 22">
            <path d="M2 20L18 4L34 20" fill="none" stroke="#999" strokeWidth="4.500" />
          </svg>
        </IndexBar>

        <ActionBar>
          <TradeButton $buy>买入</TradeButton>
          <TradeButton>卖出</TradeButton>
          <Tool $w={118}>
            <svg width="60" height="64" viewBox="0 0 60 64">
              <path d="M22 7L5 19L22 31M5 19H32Q56 21 56 39Q56 59 34 59H4" fill="none" stroke="#222" strokeWidth="6" strokeLinecap="round" strokeLinejoin="round" />
            </svg>
            撤单
          </Tool>
          <Tool $w={216}>
            <svg width="64" height="64" viewBox="0 0 64 64">
              <circle cx="32" cy="32" r="27.500" fill="none" stroke="#222" strokeWidth="5.500" />
              <circle cx="20" cy="32" r="3.700" fill="#222" />
              <circle cx="32" cy="32" r="3.700" fill="#222" />
              <circle cx="44" cy="32" r="3.700" fill="#222" />
            </svg>
            设自选
          </Tool>
          <Tool $w={118}>
            <svg width="64" height="64" viewBox="0 0 64 64">
              <circle cx="8" cy="32" r="6" fill="#222" />
              <circle cx="32" cy="32" r="6" fill="#222" />
              <circle cx="56" cy="32" r="6" fill="#222" />
            </svg>
            更多
          </Tool>
        </ActionBar>

        <NavBar>
          <svg width="46" height="42" viewBox="0 0 46 42">
            <path d="M2.500 3H43.500M2.500 21H43.500M2.500 39H43.500" stroke="#7b7b7b" strokeWidth="5.500" strokeLinecap="round" />
          </svg>
          <svg width="48" height="48" viewBox="0 0 48 48">
            <rect x="3" y="3" width="42" height="42" rx="8" fill="none" stroke="#7b7b7b" strokeWidth="5.500" />
          </svg>
          <svg width="30" height="50" viewBox="0 0 30 50">
            <path d="M27 4L5 22Q2 25 5 28L27 46" fill="none" stroke="#7b7b7b" strokeWidth="5.500" strokeLinecap="round" />
          </svg>
        </NavBar>
      </Screen>
    </>
  );
};

export default App;
